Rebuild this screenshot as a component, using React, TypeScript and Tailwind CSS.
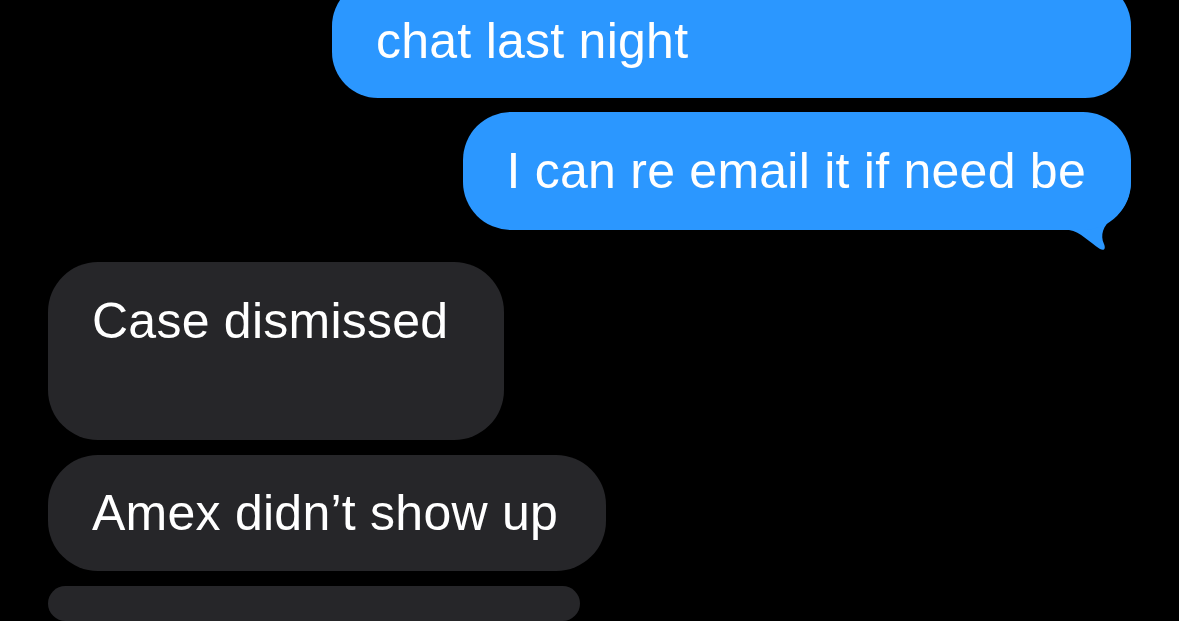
import React from 'react';

const font = { fontFamily: '"Liberation Sans", Arial, sans-serif' };

// iMessage-style tail hanging off the bottom right corner of a sent bubble
const Tail: React.FC = () => (
  <svg
    className="absolute right-0 top-[66px]"
    width="72"
    height="74"
    viewBox="0 0 72 74"
  >
    <path
      d="M0 0 L72 0 C72 22 64 33 53 41 C44 48 41 57 45 66 C47 71 45 73 41 71 C30 64 22 54 10 52 L0 52 Z"
      fill="#2b97ff"
    />
  </svg>
);

const App: React.FC = () => (
  <div
    className="h-screen w-full overflow-hidden bg-black flex flex-col px-[48px] text-white text-[50px] leading-[60px] tracking-[0.25px]"
    style={font}
  >
    <div className="self-end -mt-[20px] w-[799px] rounded-[46px] bg-[#2b97ff] pt-[31px] pb-[27px] px-[44px]">
      chat last night
    </div>

    <div className="relative self-end mt-[14px]">
      <Tail />
      <div className="relative rounded-[48px] bg-[#2b97ff] pl-[43px] pr-[45px] py-[29px]">
        I can re email it if need be
      </div>
    </div>

    <div className="self-start mt-[32px] rounded-[50px] bg-[#262629] pl-[44px] pr-[56px] py-[29px]">
      Case dismissed
      <br />
      &nbsp;
    </div>

    <div className="self-start mt-[15px] rounded-[50px] bg-[#262629] pl-[44px] pr-[48px] py-[28px]">
      Amex didn’t show up
    </div>

    <div className="self-start mt-[15px] w-[532px] h-[120px] rounded-[50px] bg-[#262629]" />
  </div>
);

export default App;
